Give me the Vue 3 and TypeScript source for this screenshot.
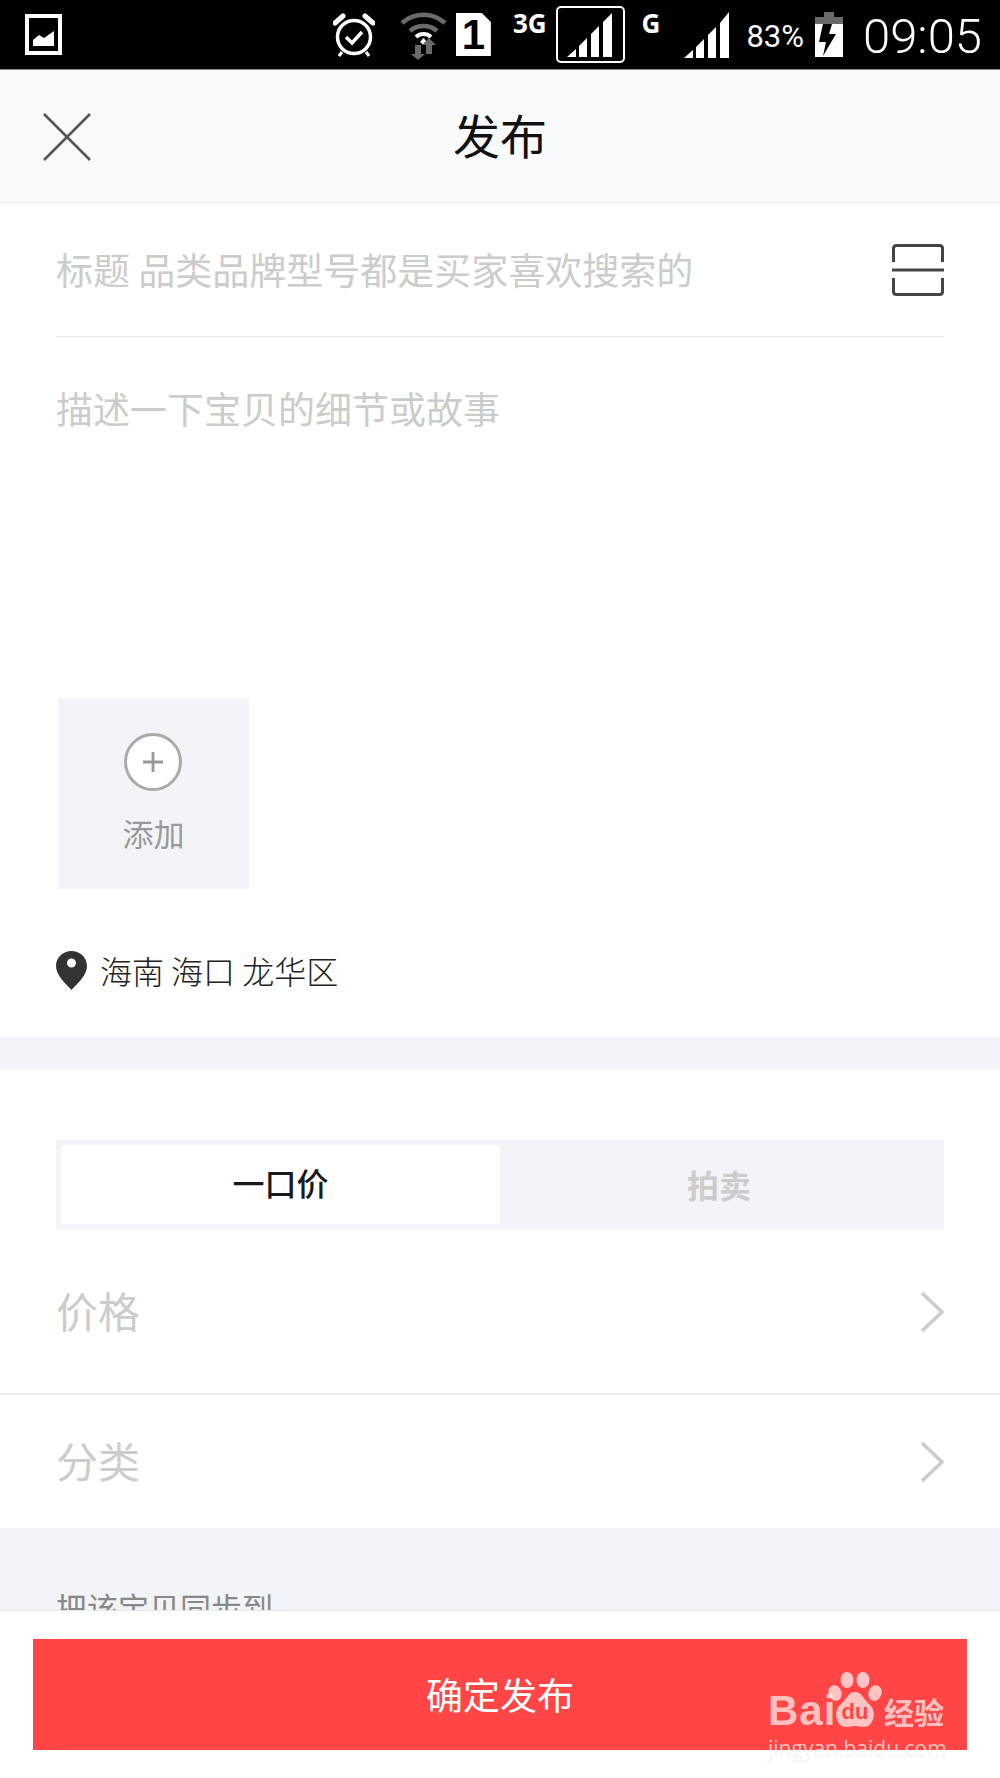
<template>
	<div class="page">
		<!-- Status bar -->
		<div class="status-bar">
			<svg class="ic-image" width="38" height="41" viewBox="0 0 38 41">
				<rect x="2" y="2" width="33" height="37" fill="none" stroke="#fff" stroke-width="4" />
				<path d="M8 32V26L14 21L19 24L29 17V32Z" fill="#fff" />
			</svg>
			<div class="status-right">
				<svg class="ic-alarm" width="42" height="44" viewBox="0 0 42 44">
					<circle cx="21" cy="24" r="16.5" fill="none" stroke="#fff" stroke-width="3.5" />
					<path d="M2 10L10 3M32 3L40 10" stroke="#fff" stroke-width="5" stroke-linecap="round" />
					<path d="M13 24L19 30L29 19" fill="none" stroke="#fff" stroke-width="3.5" />
					<path d="M9 39L6 43M33 39L36 43" stroke="#fff" stroke-width="3" />
				</svg>
				<svg class="ic-wifi" width="47" height="50" viewBox="0 0 47 50">
					<path d="M2 13A32 32 0 0 1 45 13" fill="none" stroke="#6a6a6a" stroke-width="4.5" />
					<path d="M10 21A21 21 0 0 1 37 21" fill="none" stroke="#6a6a6a" stroke-width="4.5" />
					<path d="M16 27A11 11 0 0 1 31 27" fill="none" stroke="#fff" stroke-width="4" />
					<path d="M20 32L23.5 28L27 32L23.5 35Z" fill="#fff" />
					<path d="M15 35H21V44H25L18 50L11 44H15Z" fill="#6a6a6a" />
					<path d="M26 44V35H22L29 28L36 35H32V44Z" fill="#6a6a6a" />
				</svg>
				<div class="ic-sim">1</div>
				<span class="net net-3g">3G</span>
				<div class="signal-box">
					<svg width="46" height="46" viewBox="0 0 46 46">
						<path d="M0 46L9 38V46ZM12 35L20 27V46H12ZM24 23L32 15V46H24ZM36 11L45 2V46H36Z" fill="#fff" />
					</svg>
				</div>
				<span class="net net-g">G</span>
				<svg class="ic-signal" width="45" height="46" viewBox="0 0 45 46">
					<path d="M0 46L9 38V46ZM12 35L20 27V46H12ZM24 23L32 15V46H24ZM36 11L45 0V46H36Z" fill="#fff" />
				</svg>
				<span class="battery-pct">83%</span>
				<svg class="ic-battery" width="28" height="45" viewBox="0 0 28 45">
					<path d="M9 0H19V5H28V12H0V5H9Z" fill="#6a6a6a" />
					<path d="M0 12H28V45H0Z" fill="#fff" />
					<path d="M17 12H8L4 30H11L8 44L21 22H14Z" fill="#000" />
				</svg>
				<span class="clock">09:05</span>
			</div>
		</div>

		<!-- Nav -->
		<div class="nav">
			<svg class="nav-close" width="48" height="48" viewBox="0 0 48 48">
				<path d="M1 1L47 47M47 1L1 47" stroke="#555" stroke-width="2.6" />
			</svg>
			<div class="nav-title">发布</div>
		</div>

		<div class="content">
			<div class="editor">
				<div class="title-row">
					<span class="placeholder">标题 品类品牌型号都是买家喜欢搜索的</span>
					<svg width="52" height="52" viewBox="0 0 52 52">
						<path d="M1.500 18V4.500Q1.500 1.500 4.500 1.500H47.500Q50.500 1.500 50.500 4.500V18M0 26H52M1.500 34V47.500Q1.500 50.500 4.500 50.500H47.500Q50.500 50.500 50.500 47.500V34" fill="none" stroke="#444" stroke-width="3" />
					</svg>
				</div>
				<div class="desc placeholder">描述一下宝贝的细节或故事</div>
				<div class="add-box">
					<svg width="58" height="58" viewBox="0 0 58 58">
						<circle cx="29" cy="29" r="27.5" fill="#fff" stroke="#aaa" stroke-width="3" />
						<path d="M19 29H39M29 19V39" stroke="#999" stroke-width="2.8" />
					</svg>
					<span class="add-label">添加</span>
				</div>
				<div class="location">
					<svg width="31" height="39" viewBox="0 0 31 39">
						<path fill-rule="evenodd" d="M15.5 0C24 0 31 6.500 31 15C31 24 22 32 15.500 39C9 32 0 24 0 15C0 6.500 7 0 15.500 0ZM15.500 7.500A4.500 4.500 0 1 0 15.500 16.500A4.500 4.500 0 1 0 15.500 7.500Z" fill="#333" />
					</svg>
					<span>海南 海口 龙华区</span>
				</div>
			</div>

			<div class="card">
				<div class="segment">
					<div class="seg-item seg-active">一口价</div>
					<div class="seg-item seg-idle">拍卖</div>
				</div>
				<div v-for="(row, index) in rows" :key="row" class="list-row" :class="{ first: index === 0 }">
					<span class="row-label">{{ row }}</span>
					<svg width="24" height="40" viewBox="0 0 24 40">
						<path d="M2 1L22 20L2 39" fill="none" stroke="#ccc" stroke-width="3.6" />
					</svg>
				</div>
			</div>

			<div class="sync-label">把该宝贝同步到</div>
		</div>

		<!-- Footer -->
		<div class="footer">
			<div class="submit">确定发布</div>
			<div class="watermark">
				<div class="wm-top">
					<span class="wm-bai">Bai</span>
					<svg width="54" height="56" viewBox="0 0 54 56">
						<ellipse cx="19" cy="8" rx="6.500" ry="8" />
						<ellipse cx="35" cy="8" rx="6.500" ry="8" />
						<ellipse cx="7" cy="21" rx="6.500" ry="8" transform="rotate(-20 7 21)" />
						<ellipse cx="47" cy="21" rx="6.500" ry="8" transform="rotate(20 47 21)" />
						<path d="M27 20C34 20 36 28 42 33C49 39 46 55 36 55C32 55 30 54 27 54C24 54 22 55 18 55C8 55 5 39 12 33C18 28 20 20 27 20Z" />
						<text x="27" y="47" class="wm-du">du</text>
					</svg>
					<span class="wm-jy">经验</span>
				</div>
				<div class="wm-url">jingyan.baidu.com</div>
			</div>
		</div>
	</div>
</template>

<script setup lang="ts">
	const rows: string[] = ['价格', '分类'];
</script>

<style>
	html,
	body {
		margin: 0;
		background: #fff;
	}
</style>

<style scoped>
	.page {
		position: relative;
		display: flex;
		flex-direction: column;
		width: 1000px;
		height: 1778px;
		overflow: hidden;
		background: #f3f4f8;
		font-family: "Noto Sans CJK SC", "Noto Sans", sans-serif;
		font-weight: 400;
	}

	.status-bar {
		flex: none;
		display: flex;
		align-items: center;
		justify-content: space-between;
		box-sizing: border-box;
		height: 70px;
		padding: 0 18px 0 25px;
		background: #000;
		border-bottom: 1px solid #888;
		color: #fff;
	}

	.status-right {
		display: flex;
		align-items: center;
		font-family: Roboto, sans-serif;
	}

	.ic-wifi {
		margin-left: 25px;
	}

	.ic-sim {
		width: 35px;
		height: 43px;
		margin-left: 9px;
		background: #fff;
		clip-path: polygon(0 0, 26px 0, 100% 9px, 100% 100%, 0 100%);
		color: #000;
		font-family: "Liberation Sans", sans-serif;
		font-size: 42px;
		font-weight: 700;
		line-height: 44px;
		text-align: center;
	}

	.net {
		font-family: "Open Sans", sans-serif;
		font-size: 26px;
		font-weight: 700;
		line-height: 30px;
		margin-bottom: 24px;
	}

	.net-3g {
		margin-left: 22px;
	}

	.net-g {
		margin-left: 17px;
	}

	.signal-box {
		display: flex;
		align-items: flex-end;
		justify-content: center;
		box-sizing: border-box;
		width: 69px;
		height: 57px;
		margin-left: 9px;
		padding-bottom: 4px;
		border: 2px solid #fff;
		border-radius: 5px;
	}

	.ic-signal {
		margin-left: 24px;
	}

	.battery-pct {
		margin: 3px 0 0 17px;
		font-size: 31px;
	}

	.ic-battery {
		margin-left: 11px;
	}

	.clock {
		margin: 3px 0 0 20px;
		font-size: 49px;
		font-weight: 300;
	}

	.nav {
		position: relative;
		flex: none;
		display: flex;
		align-items: center;
		justify-content: center;
		box-sizing: border-box;
		height: 133px;
		background: #f9fafc;
		border-bottom: 1px solid #eee;
	}

	.nav-close {
		position: absolute;
		left: 43px;
		top: 43px;
	}

	.nav-title {
		margin-top: -5px;
		font-size: 47px;
		color: #111;
	}

	.content {
		flex: 1;
		min-height: 0;
		overflow: hidden;
	}

	.editor {
		box-sizing: border-box;
		height: 834px;
		padding: 0 56px;
		background: #fff;
	}

	.placeholder {
		font-size: 37px;
		color: #ccc;
	}

	.title-row {
		display: flex;
		align-items: center;
		justify-content: space-between;
		box-sizing: border-box;
		height: 134px;
		border-bottom: 1px solid #e8e8e8;
	}

	.title-row .placeholder {
		margin-top: -2px;
	}

	.desc {
		height: 361px;
		padding-top: 43px;
		box-sizing: border-box;
		line-height: 56px;
	}

	.add-box {
		display: flex;
		flex-direction: column;
		align-items: center;
		box-sizing: border-box;
		width: 191px;
		height: 191px;
		margin-left: 2px;
		padding-top: 35px;
		background: #f3f4f8;
	}

	.add-box svg {
		margin-left: -2px;
	}

	.add-label {
		margin-top: 20px;
		font-size: 31px;
		line-height: 44px;
		color: #999;
	}

	.location {
		display: flex;
		align-items: center;
		gap: 13px;
		margin-top: 59px;
		font-size: 32px;
		font-weight: 300;
		line-height: 44px;
		color: #222;
	}

	.card {
		box-sizing: border-box;
		height: 458px;
		margin-top: 33px;
		padding-top: 70px;
		background: #fff;
	}

	.segment {
		display: flex;
		box-sizing: border-box;
		height: 90px;
		margin: 0 56px;
		padding: 5px 0 6px 5px;
		background: #f3f4f8;
	}

	.seg-item {
		display: flex;
		align-items: center;
		justify-content: center;
		font-size: 32px;
	}

	.seg-idle {
		flex: 1;
		padding: 0 6px 2px 0;
		font-weight: 700;
		color: #ccc;
	}

	.seg-active {
		flex: none;
		width: 439px;
		padding-bottom: 5px;
		background: #fff;
		font-weight: 500;
		color: #1a1a1a;
	}

	.list-row {
		display: flex;
		align-items: center;
		justify-content: space-between;
		box-sizing: border-box;
		height: 133px;
		padding: 0 56px;
		font-size: 42px;
		color: #ccc;
	}

	.list-row.first {
		height: 165px;
		border-bottom: 2px solid #eee;
	}

	.row-label {
		margin-top: -5px;
	}

	.sync-label {
		margin: 57px 0 0 56px;
		font-size: 31px;
		line-height: 44px;
		color: #888;
	}

	.footer {
		flex: none;
		box-sizing: border-box;
		height: 168px;
		padding: 28px 33px;
		background: #fff;
		border-top: 1px solid #e8e8e8;
	}

	.submit {
		display: flex;
		align-items: center;
		justify-content: center;
		height: 111px;
		padding-bottom: 2px;
		box-sizing: border-box;
		background: #ff4545;
		color: #fff;
		font-size: 37px;
	}

	.watermark {
		position: absolute;
		left: 768px;
		top: 1672px;
		width: 178px;
		color: rgba(255, 255, 255, 0.68);
		fill: rgba(255, 255, 255, 0.68);
	}

	.wm-top {
		display: flex;
		align-items: flex-end;
		height: 56px;
	}

	.wm-bai {
		width: 60px;
		margin-bottom: -1px;
		font-family: "Liberation Sans", sans-serif;
		font-size: 42px;
		font-weight: 700;
		line-height: 36px;
		letter-spacing: 1px;
	}

	.wm-du {
		font-family: "Liberation Sans", sans-serif;
		font-size: 22px;
		font-weight: 700;
		text-anchor: middle;
		fill: #ff4545;
	}

	.wm-jy {
		margin-left: 2px;
		font-size: 30px;
		font-weight: 700;
		line-height: 34px;
	}

	.wm-url {
		margin-top: 5px;
		font-family: "Open Sans", sans-serif;
		font-size: 21px;
		font-weight: 400;
		line-height: 30px;
		white-space: nowrap;
		text-shadow: 0 1px 1px rgba(0, 0, 0, 0.08);
	}
</style>
